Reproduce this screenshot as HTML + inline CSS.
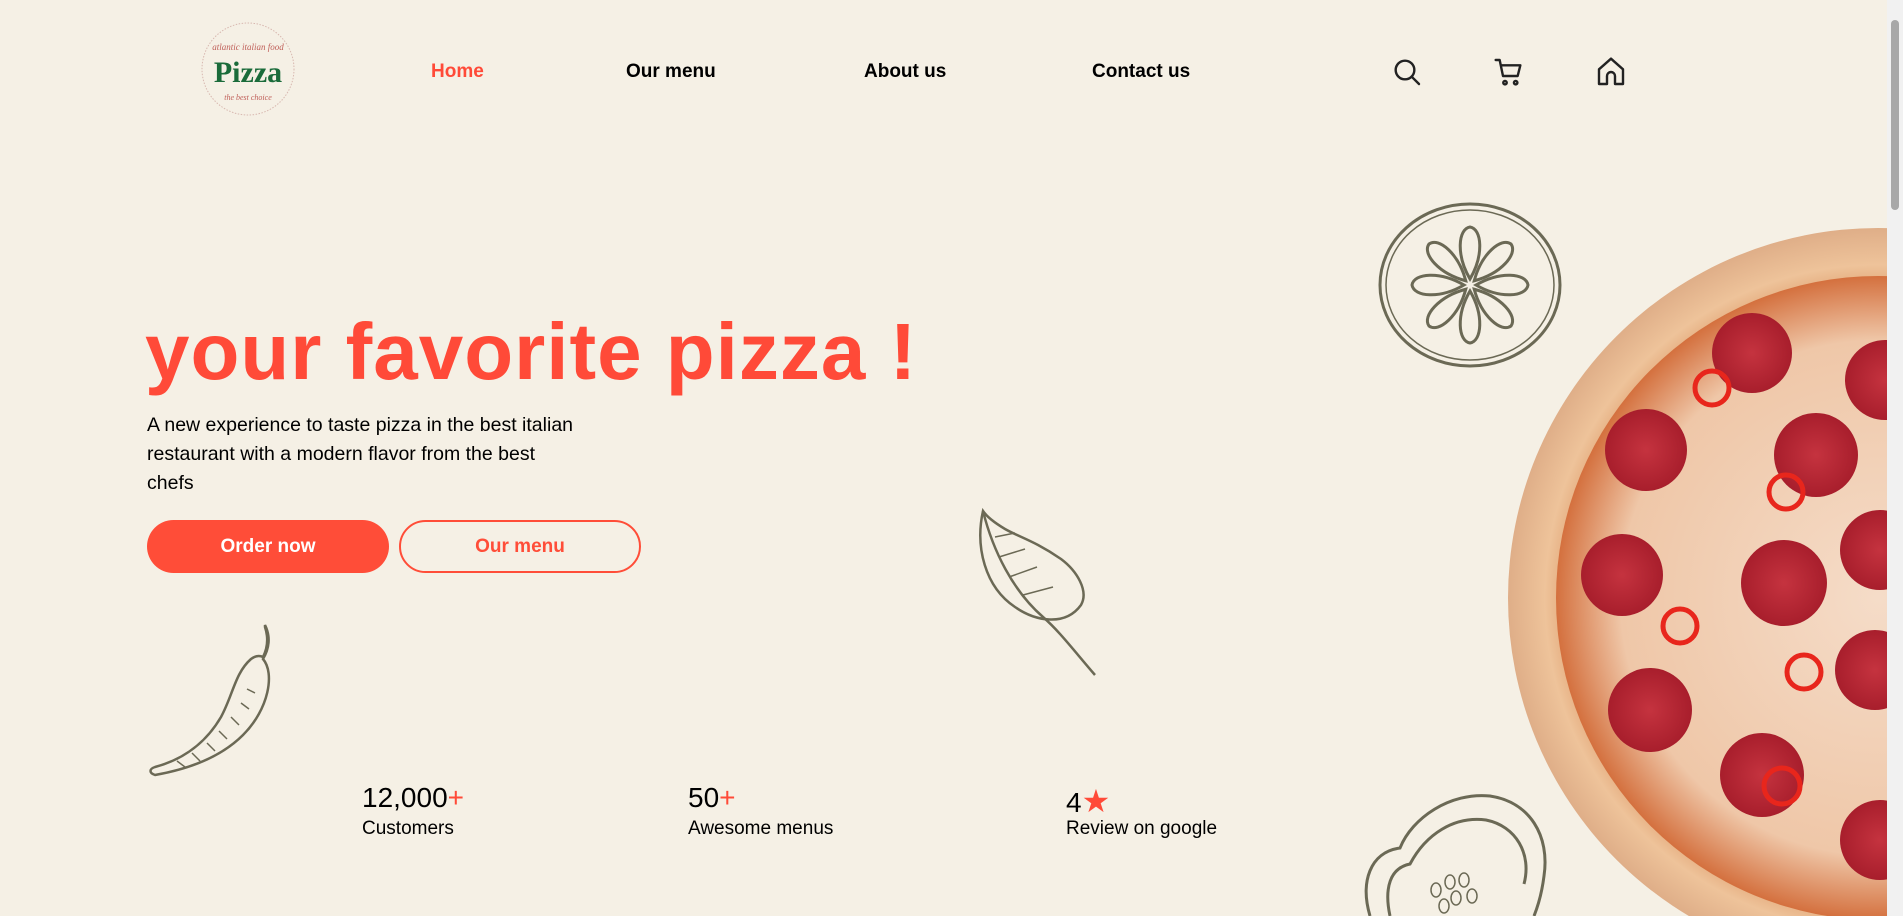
<!DOCTYPE html>
<html><head><meta charset="utf-8"><style>
*{margin:0;padding:0;box-sizing:border-box}
html,body{width:1903px;height:916px;overflow:hidden;background:#f5f0e5;font-family:"Liberation Sans",sans-serif;color:#000}
.abs{position:absolute}
nav a{position:absolute;top:61px;font-size:19px;font-weight:bold;color:#000;text-decoration:none}
h1{position:absolute;left:145px;top:306px;font-size:80px;letter-spacing:1px;color:#ff4a38;font-weight:bold;white-space:nowrap}
p.lead{position:absolute;left:147px;top:411px;width:600px;font-size:19.5px;line-height:29px;white-space:nowrap}
.btn{position:absolute;top:520px;width:242px;height:53px;border-radius:27px;font-size:19px;font-weight:bold;display:flex;align-items:center;justify-content:center}
.stat{position:absolute;top:782px}
.stat b{font-weight:normal;font-size:28px;display:block;height:36px}
.stat b span{color:#ff4a38}
.stat div{font-size:19px}
.sb{position:absolute;right:0;top:0;width:16px;height:916px;background:#f1f1f1}
</style></head><body>
<svg class="abs" style="left:198px;top:20px" width="100" height="98" viewBox="0 0 100 98">
<ellipse cx="50" cy="49" rx="46" ry="46" fill="#f5f0e5" stroke="#d8b8b0" stroke-dasharray="1.5 1.5"/>
<text x="50" y="30" font-size="9" fill="#c0605a" text-anchor="middle" font-style="italic" font-family="Liberation Serif,serif">atlantic italian food</text>
<text x="50" y="62" font-size="30" fill="#1a6b3a" text-anchor="middle" font-weight="bold" font-family="Liberation Serif,serif">Pizza</text>
<text x="50" y="80" font-size="8" fill="#c0605a" text-anchor="middle" font-style="italic" font-family="Liberation Serif,serif">the best choice</text>
</svg>
<nav>
<a style="left:431px;color:#ff4a38">Home</a>
<a style="left:626px">Our menu</a>
<a style="left:864px">About us</a>
<a style="left:1092px">Contact us</a>
</nav>
<svg class="abs" style="left:1391px;top:56px" width="32" height="32" viewBox="0 0 24 24" fill="none" stroke="#222" stroke-width="1.8" stroke-linecap="round"><circle cx="10.5" cy="10.5" r="7"/><path d="M15.5 15.5L21 21"/></svg>
<svg class="abs" style="left:1493px;top:56px" width="32" height="32" viewBox="0 0 24 24" fill="none" stroke="#222" stroke-width="1.8" stroke-linecap="round" stroke-linejoin="round"><path d="M2 3h3l2.5 12h11l2-8H6.5"/><circle cx="9" cy="20" r="1.3"/><circle cx="17" cy="20" r="1.3"/></svg>
<svg class="abs" style="left:1595px;top:55px" width="32" height="34" viewBox="0 0 24 24" fill="none" stroke="#222" stroke-width="1.8" stroke-linejoin="round"><path d="M3 21V10l9-8 9 8v11h-6v-6a3 3 0 0 0-6 0v6z"/></svg>

<h1>your favorite pizza !</h1>
<p class="lead">A new experience to taste pizza in the best italian<br>restaurant with a modern flavor from the best<br>chefs</p>
<div class="btn" style="left:147px;background:#ff4d38;color:#fff">Order now</div>
<div class="btn" style="left:399px;border:2px solid #ff4d38;color:#ff4d38">Our menu</div>

<svg class="abs" style="left:147px;top:621px" width="142" height="156" viewBox="0 0 142 156" fill="none" stroke="#6b6955" stroke-width="2.5">
<path d="M118 4c6 12 4 24-2 34 12 14 6 50-20 76-22 22-54 34-88 40 -6-2-6-6 0-8 30-8 52-26 66-50 12-22 14-44 30-58 4-3 8-4 12-2 4-8 6-18 2-30z"/>
<path d="M30 140l8 6M45 132l8 8M60 122l8 8M72 110l8 8M84 96l8 8M94 82l8 6M100 68l8 4" stroke-width="1.5"/>
</svg>
<svg class="abs" style="left:975px;top:507px" width="144" height="170" viewBox="0 0 144 170" fill="none" stroke="#6b6955" stroke-width="2.5">
<path d="M8 4C0 40 10 80 40 100c20 14 50 20 66-2 8-14-4-34-20-46C60 34 44 30 30 22 20 16 12 10 8 4z"/>
<path d="M8 4c10 40 30 80 60 106 16 14 28 30 52 58"/>
<path d="M20 30l20-4M24 50l26-8M34 70l28-10M48 88l30-8" stroke-width="1.5"/>
</svg>
<svg class="abs" style="left:1377px;top:201px" width="186" height="168" viewBox="0 0 186 168" fill="none" stroke="#6b6955" stroke-width="3">
<ellipse cx="93" cy="84" rx="90" ry="81"/>
<ellipse cx="93" cy="84" rx="84" ry="75" stroke-width="1.5"/>
<g transform="translate(93 84)">
<path d="M0-6C-14-30-12-56 0-58 12-56 14-30 0-6z"/>
<path d="M0-6C-14-30-12-56 0-58 12-56 14-30 0-6z" transform="rotate(45)"/>
<path d="M0-6C-14-30-12-56 0-58 12-56 14-30 0-6z" transform="rotate(90)"/>
<path d="M0-6C-14-30-12-56 0-58 12-56 14-30 0-6z" transform="rotate(135)"/>
<path d="M0-6C-14-30-12-56 0-58 12-56 14-30 0-6z" transform="rotate(180)"/>
<path d="M0-6C-14-30-12-56 0-58 12-56 14-30 0-6z" transform="rotate(225)"/>
<path d="M0-6C-14-30-12-56 0-58 12-56 14-30 0-6z" transform="rotate(270)"/>
<path d="M0-6C-14-30-12-56 0-58 12-56 14-30 0-6z" transform="rotate(315)"/>
</g></svg>
<svg class="abs" style="left:1360px;top:792px" width="190" height="124" viewBox="0 0 190 124" fill="none" stroke="#6b6955" stroke-width="3">
<path d="M10 124C0 90 10 60 40 56c12-30 50-56 90-52 40 6 60 40 54 80-2 16-6 30-10 40"/>
<path d="M30 124C24 96 30 76 50 72c16-30 44-48 76-44 30 6 46 34 38 64"/>
<g stroke-width="1.5"><ellipse cx="90" cy="90" rx="5" ry="7"/><ellipse cx="104" cy="88" rx="5" ry="7"/><ellipse cx="76" cy="98" rx="5" ry="7"/><ellipse cx="96" cy="106" rx="5" ry="7"/><ellipse cx="112" cy="104" rx="5" ry="7"/><ellipse cx="84" cy="114" rx="5" ry="7"/></g>
</svg>
<svg class="abs" style="left:1500px;top:220px" width="387" height="696" viewBox="0 0 387 696">
<defs>
<radialGradient id="cr" cx="0.5" cy="0.5" r="0.5"><stop offset="0.82" stop-color="#e0a070"/><stop offset="0.9" stop-color="#eec39a"/><stop offset="1" stop-color="#dfae88"/></radialGradient>
<radialGradient id="ch" cx="0.5" cy="0.5" r="0.5"><stop offset="0" stop-color="#f5dcc8"/><stop offset="0.8" stop-color="#efc7a8"/><stop offset="1" stop-color="#d4703e"/></radialGradient>
<radialGradient id="pp" cx="0.5" cy="0.5" r="0.5"><stop offset="0" stop-color="#c5333f"/><stop offset="1" stop-color="#a81e2c"/></radialGradient>
</defs>
<circle cx="378" cy="378" r="370" fill="url(#cr)"/>
<circle cx="378" cy="378" r="322" fill="url(#ch)"/>
<g fill="url(#pp)">
<circle cx="252" cy="133" r="40"/><circle cx="146" cy="230" r="41"/><circle cx="316" cy="235" r="42"/>
<circle cx="122" cy="355" r="41"/><circle cx="284" cy="363" r="43"/><circle cx="150" cy="490" r="42"/>
<circle cx="262" cy="555" r="42"/><circle cx="385" cy="160" r="40"/><circle cx="380" cy="330" r="40"/><circle cx="375" cy="450" r="40"/><circle cx="380" cy="620" r="40"/>
</g>
<g fill="none" stroke="#e8261c" stroke-width="5">
<circle cx="212" cy="168" r="17"/><circle cx="286" cy="272" r="17"/><circle cx="180" cy="406" r="17"/><circle cx="304" cy="452" r="17"/><circle cx="282" cy="566" r="18"/>
</g>
</svg>

<div class="stat" style="left:362px"><b>12,000<span>+</span></b><div>Customers</div></div>
<div class="stat" style="left:688px"><b>50<span>+</span></b><div>Awesome menus</div></div>
<div class="stat" style="left:1066px"><b>4<span style="font-size:32px">★</span></b><div>Review on google</div></div>

<div class="sb"><div style="position:absolute;left:4px;top:20px;width:8px;height:190px;border-radius:4px;background:#a8a8a8"></div></div>
</body></html>
